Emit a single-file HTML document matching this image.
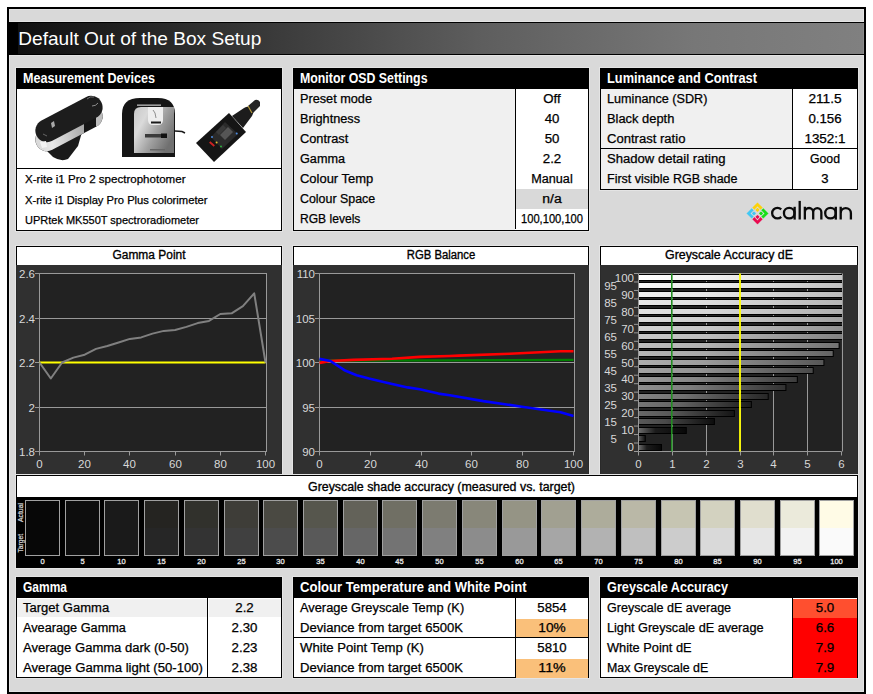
<!DOCTYPE html>
<html><head><meta charset="utf-8"><title>Default Out of the Box Setup</title>
<style>html,body{margin:0;padding:0;background:#fff;} svg{display:block;} text{font-family:"Liberation Sans",sans-serif;}</style>
</head><body>
<svg width="873" height="694" viewBox="0 0 873 694" shape-rendering="auto">
<rect x="0" y="0" width="873" height="694" fill="#fff" />
<rect x="7" y="7" width="859" height="687" fill="#000" />
<rect x="9" y="9" width="855" height="683" fill="#e4e4e4" />
<rect x="10" y="10" width="853" height="681" fill="#d9d9d9" />
<rect x="9" y="21" width="855" height="1" fill="#e4e4e4" />
<rect x="9" y="22" width="855" height="33" fill="#000" />
<defs><linearGradient id="tg" x1="0" x2="1" y1="0" y2="0"><stop offset="0" stop-color="#101010"/><stop offset="0.3" stop-color="#3a3a3a"/><stop offset="0.55" stop-color="#5e5e5e"/><stop offset="0.8" stop-color="#777"/><stop offset="1" stop-color="#808080"/></linearGradient></defs>
<rect x="18" y="23" width="845" height="31" fill="url(#tg)"/>
<rect x="863" y="23" width="1" height="31" fill="#8c8c8c" />
<rect x="9" y="55" width="855" height="1" fill="#e4e4e4" />
<text x="18.3" y="44.6" font-size="18.5" fill="#fff" text-anchor="start" textLength="243.0" lengthAdjust="spacingAndGlyphs" >Default Out of the Box Setup</text>
<rect x="15" y="67" width="268" height="165" fill="#e4e4e4" />
<rect x="16" y="68" width="266" height="163" fill="#000" />
<rect x="17" y="69" width="264" height="161" fill="#fff" />
<rect x="16" y="68" width="266" height="21" fill="#000" />
<text x="23" y="82.9" font-size="14" fill="#fff" text-anchor="start" font-weight="bold" textLength="132.0" lengthAdjust="spacingAndGlyphs" >Measurement Devices</text>
<rect x="16" y="168" width="266" height="1" fill="#000" />
<text x="25" y="183.0" font-size="11.3" fill="#000" text-anchor="start" textLength="160.5" lengthAdjust="spacingAndGlyphs" stroke="#000" stroke-width="0.25">X-rite i1 Pro 2 spectrophotomer</text>
<text x="25" y="203.5" font-size="11.3" fill="#000" text-anchor="start" textLength="182.5" lengthAdjust="spacingAndGlyphs" stroke="#000" stroke-width="0.25">X-rite i1 Display Pro Plus colorimeter</text>
<text x="25" y="224.0" font-size="11.3" fill="#000" text-anchor="start" textLength="174.0" lengthAdjust="spacingAndGlyphs" stroke="#000" stroke-width="0.25">UPRtek MK550T spectroradiometer</text>

<defs>
 <linearGradient id="silv1" gradientUnits="userSpaceOnUse" x1="36" y1="140" x2="84" y2="128"><stop offset="0" stop-color="#d8d8d8"/><stop offset="0.3" stop-color="#e8e8e8"/><stop offset="1" stop-color="#a8a8a8"/></linearGradient>
 <linearGradient id="silv2" x1="0" y1="0" x2="1" y2="0.6"><stop offset="0" stop-color="#c8c8c8"/><stop offset="0.3" stop-color="#dadada"/><stop offset="0.65" stop-color="#a0a0a0"/><stop offset="1" stop-color="#707070"/></linearGradient>
</defs>
<g>
 <clipPath id="cl1"><rect x="30" y="90" width="54" height="75"/></clipPath>
 <clipPath id="cl2"><rect x="96" y="90" width="10" height="40"/></clipPath>
 <path d="M46,150 L82,132 L78,146 L68,159 Q61,162 53,157 Z" fill="#1a1a1a"/>
 <line x1="46.9" y1="139.7" x2="91.1" y2="116.3" stroke="#161616" stroke-width="23" stroke-linecap="round"/>
 <line x1="46.9" y1="139.7" x2="91.1" y2="116.3" stroke="url(#silv1)" stroke-width="23" stroke-linecap="round" clip-path="url(#cl1)"/>
 <line x1="46.9" y1="139.7" x2="91.1" y2="116.3" stroke="#bdbdbd" stroke-width="23" stroke-linecap="round" clip-path="url(#cl2)"/>
 <line x1="46.9" y1="130.7" x2="91.1" y2="107.3" stroke="#1d1d1d" stroke-width="23" stroke-linecap="round"/>
 <path d="M40,142 L46,141 L47,147 L42,148 Z" fill="#f2f2f2"/>
 <path d="M51,123 L54,121 L55,126 L52,128 Z" fill="#aaa"/>
 <path d="M87,99 Q90,96 94,97" stroke="#888" stroke-width="0.8" fill="none"/>
 <path d="M92,106 Q96,106 98,103" stroke="#aaa" stroke-width="0.8" fill="none"/>
 <path d="M43,134 L47,136" stroke="#777" stroke-width="0.8"/>

 <path d="M122,157 L122,114 Q122,98 140,98 L158,98 Q175,98 175,114 L175,157 Z" fill="#151515"/>
 <path d="M134,153 L134,114 Q134,107 141,107 L174,107 L174,153 Z" fill="url(#silv2)"/>
 <rect x="137" y="104.5" width="24" height="1.3" fill="#bdbdbd"/>
 <path d="M148,107 L163,107 L163,120 Q163,125 158,125 L153,125 Q148,125 148,120 Z" fill="#eeeeee"/>
 <path d="M153,110 L155,113 L156,118" stroke="#666" stroke-width="0.7" fill="none"/>
 <rect x="151" y="121.5" width="10" height="2" fill="#1a1a1a"/>
 <rect x="145" y="134" width="16" height="3.5" fill="#3a3a3a"/>
 <rect x="161" y="133.5" width="6" height="4.5" fill="#111"/>
 <rect x="150" y="149" width="15" height="1.5" fill="#666"/>
 <path d="M175,131 L182,131.5 L185,133" stroke="#1a1a1a" stroke-width="1.6" fill="none"/>

 <path d="M196,143 L229,113 L246,132 L214,162 Z" fill="#151515"/>
 <path d="M232,116 L244,108 Q247,106 250,107 L253,110 Q254,113 252,116 L243,128 Z" fill="#1c1c1c"/>
 <path d="M248,106 L255,100 Q258,99 260,102 L260,106 L253,113 Z" fill="#252525"/>
 <path d="M248,106 L252,113" stroke="#b89c3a" stroke-width="1.2"/>
 <path d="M211,137 L225,122 L238,134 L222,149 Z" fill="#2a2a2a"/>
 <path d="M220,135 L228,127 L233,132 L225,140 Z" fill="#555"/>
 <path d="M216,132 L223,125 L226,128 L219,135 Z" fill="#3a3a3a"/>
 <rect x="209" y="143" width="6" height="2" fill="#c22" transform="rotate(40 212 144)"/>
 <circle cx="212" cy="137" r="1" fill="#4a8ae0"/>
 <circle cx="216.6" cy="142.4" r="1" fill="#e0c030"/>
 <circle cx="221" cy="146.5" r="1" fill="#30b040"/>
 <circle cx="236.7" cy="133.5" r="1" fill="#4a8ae0"/>
</g>
<rect x="292" y="67" width="298" height="165" fill="#e4e4e4" />
<rect x="293" y="68" width="296" height="163" fill="#000" />
<rect x="294" y="69" width="294" height="161" fill="#fff" />
<rect x="293" y="68" width="296" height="21" fill="#000" />
<text x="300" y="82.9" font-size="14" fill="#fff" text-anchor="start" font-weight="bold" textLength="127.5" lengthAdjust="spacingAndGlyphs" >Monitor OSD Settings</text>
<rect x="294" y="89" width="221" height="141" fill="#f0f0f0" />
<text x="300" y="102.5" font-size="12.3" fill="#000" text-anchor="start" textLength="72.0" lengthAdjust="spacingAndGlyphs" stroke="#000" stroke-width="0.25">Preset mode</text>
<text x="552.0" y="102.5" font-size="12" fill="#000" text-anchor="middle" textLength="17.4" lengthAdjust="spacingAndGlyphs" stroke="#000" stroke-width="0.25">Off</text>
<text x="300" y="122.5" font-size="12.3" fill="#000" text-anchor="start" textLength="60.1" lengthAdjust="spacingAndGlyphs" stroke="#000" stroke-width="0.25">Brightness</text>
<text x="552.0" y="122.5" font-size="12" fill="#000" text-anchor="middle" textLength="14.7" lengthAdjust="spacingAndGlyphs" stroke="#000" stroke-width="0.25">40</text>
<text x="300" y="142.5" font-size="12.3" fill="#000" text-anchor="start" textLength="48.3" lengthAdjust="spacingAndGlyphs" stroke="#000" stroke-width="0.25">Contrast</text>
<text x="552.0" y="142.5" font-size="12" fill="#000" text-anchor="middle" textLength="14.7" lengthAdjust="spacingAndGlyphs" stroke="#000" stroke-width="0.25">50</text>
<text x="300" y="162.5" font-size="12.3" fill="#000" text-anchor="start" textLength="45.0" lengthAdjust="spacingAndGlyphs" stroke="#000" stroke-width="0.25">Gamma</text>
<text x="552.0" y="162.5" font-size="12" fill="#000" text-anchor="middle" textLength="18.5" lengthAdjust="spacingAndGlyphs" stroke="#000" stroke-width="0.25">2.2</text>
<text x="300" y="182.5" font-size="12.3" fill="#000" text-anchor="start" textLength="73.2" lengthAdjust="spacingAndGlyphs" stroke="#000" stroke-width="0.25">Colour Temp</text>
<text x="552.0" y="182.5" font-size="12" fill="#000" text-anchor="middle" textLength="41.4" lengthAdjust="spacingAndGlyphs" stroke="#000" stroke-width="0.25">Manual</text>
<rect x="516" y="189" width="72" height="20" fill="#d9d9d9" />
<text x="300" y="202.5" font-size="12.3" fill="#000" text-anchor="start" textLength="75.2" lengthAdjust="spacingAndGlyphs" stroke="#000" stroke-width="0.25">Colour Space</text>
<text x="552.0" y="202.5" font-size="12" fill="#000" text-anchor="middle" textLength="19.4" lengthAdjust="spacingAndGlyphs" stroke="#000" stroke-width="0.25">n/a</text>
<text x="300" y="222.5" font-size="12.3" fill="#000" text-anchor="start" textLength="60.4" lengthAdjust="spacingAndGlyphs" stroke="#000" stroke-width="0.25">RGB levels</text>
<text x="552.0" y="222.5" font-size="12" fill="#000" text-anchor="middle" textLength="62.0" lengthAdjust="spacingAndGlyphs" stroke="#000" stroke-width="0.25">100,100,100</text>
<rect x="515" y="89" width="1" height="140" fill="#000" />
<rect x="599" y="67" width="260" height="124" fill="#e4e4e4" />
<rect x="600" y="68" width="258" height="122" fill="#000" />
<rect x="601" y="69" width="256" height="120" fill="#fff" />
<rect x="600" y="68" width="258" height="21" fill="#000" />
<text x="607" y="82.9" font-size="14" fill="#fff" text-anchor="start" font-weight="bold" textLength="150.0" lengthAdjust="spacingAndGlyphs" >Luminance and Contrast</text>
<rect x="601" y="89" width="191" height="100" fill="#f0f0f0" />
<text x="607" y="102.5" font-size="12.3" fill="#000" text-anchor="start" textLength="100.4" lengthAdjust="spacingAndGlyphs" stroke="#000" stroke-width="0.25">Luminance (SDR)</text>
<text x="825.0" y="102.5" font-size="12" fill="#000" text-anchor="middle" textLength="33.2" lengthAdjust="spacingAndGlyphs" stroke="#000" stroke-width="0.25">211.5</text>
<text x="607" y="122.5" font-size="12.3" fill="#000" text-anchor="start" textLength="67.3" lengthAdjust="spacingAndGlyphs" stroke="#000" stroke-width="0.25">Black depth</text>
<text x="825.0" y="122.5" font-size="12" fill="#000" text-anchor="middle" textLength="33.2" lengthAdjust="spacingAndGlyphs" stroke="#000" stroke-width="0.25">0.156</text>
<text x="607" y="142.5" font-size="12.3" fill="#000" text-anchor="start" textLength="78.4" lengthAdjust="spacingAndGlyphs" stroke="#000" stroke-width="0.25">Contrast ratio</text>
<text x="825.0" y="142.5" font-size="12" fill="#000" text-anchor="middle" textLength="41.2" lengthAdjust="spacingAndGlyphs" stroke="#000" stroke-width="0.25">1352:1</text>
<text x="607" y="162.5" font-size="12.3" fill="#000" text-anchor="start" textLength="118.5" lengthAdjust="spacingAndGlyphs" stroke="#000" stroke-width="0.25">Shadow detail rating</text>
<text x="825.0" y="162.5" font-size="12" fill="#000" text-anchor="middle" textLength="30.0" lengthAdjust="spacingAndGlyphs" stroke="#000" stroke-width="0.25">Good</text>
<text x="607" y="182.5" font-size="12.3" fill="#000" text-anchor="start" textLength="130.5" lengthAdjust="spacingAndGlyphs" stroke="#000" stroke-width="0.25">First visible RGB shade</text>
<text x="825.0" y="182.5" font-size="12" fill="#000" text-anchor="middle" textLength="7.3" lengthAdjust="spacingAndGlyphs" stroke="#000" stroke-width="0.25">3</text>
<rect x="792" y="89" width="1" height="100" fill="#000" />
<rect x="600" y="148" width="258" height="1" fill="#000" />
<g transform="translate(757.5,213.4) rotate(45)"><path d="M-7.60,-0.60 L-7.60,-7.60 L-0.60,-7.60 L-0.60,-5.00 L-5.00,-5.00 L-5.00,-0.60 Z" fill="#fcd20a" stroke="#fcd20a" stroke-width="0.3" stroke-linejoin="round"/><rect x="-4.0" y="-4.0" width="3.0" height="3.0" rx="0.5" fill="#fcd20a"/><path d="M7.60,-0.60 L7.60,-7.60 L0.60,-7.60 L0.60,-5.00 L5.00,-5.00 L5.00,-0.60 Z" fill="#16e016" stroke="#16e016" stroke-width="0.3" stroke-linejoin="round"/><rect x="1.0" y="-4.0" width="3.0" height="3.0" rx="0.5" fill="#16e016"/><path d="M7.60,0.60 L7.60,7.60 L0.60,7.60 L0.60,5.00 L5.00,5.00 L5.00,0.60 Z" fill="#ea0a50" stroke="#ea0a50" stroke-width="0.3" stroke-linejoin="round"/><rect x="1.0" y="1.0" width="3.0" height="3.0" rx="0.5" fill="#ea0a50"/><path d="M-7.60,0.60 L-7.60,7.60 L-0.60,7.60 L-0.60,5.00 L-5.00,5.00 L-5.00,0.60 Z" fill="#40c8f4" stroke="#40c8f4" stroke-width="0.3" stroke-linejoin="round"/><rect x="-4.0" y="1.0" width="3.0" height="3.0" rx="0.5" fill="#40c8f4"/></g>
<g fill="none" stroke="#0a0a0a" stroke-width="2.3">
 <path d="M781.2,209.4 A5.3,5.3 0 1 0 781.2,216.9"/>
 <circle cx="789.2" cy="213.15" r="5.25"/>
 <path d="M794.65,206.8 L794.65,219.6"/>
 <path d="M799.7,200.9 L799.7,219.5"/>
 <path d="M804.85,219.6 L804.85,206.8 M804.85,212.2 A4.17,4.17 0 0 1 813.2,212.2 L813.2,219.6 M813.2,212.2 A4.07,4.07 0 0 1 821.35,212.2 L821.35,219.6"/>
 <circle cx="830.45" cy="213.15" r="5.25"/>
 <path d="M835.8,206.8 L835.8,219.6"/>
 <path d="M840.7,219.6 L840.7,206.8 M840.7,213.15 A5.1,5.1 0 0 1 850.9,213.15 L850.9,219.6"/>
</g>
<rect x="15" y="245" width="268" height="232" fill="#e4e4e4" />
<rect x="16" y="246" width="266" height="230" fill="#000" />
<rect x="17" y="247" width="264" height="228" fill="#fff" />
<rect x="17" y="265" width="264" height="210" fill="#303030" />
<rect x="16" y="265" width="1" height="210" fill="#2a2a2a" />
<rect x="281" y="265" width="1" height="210" fill="#2a2a2a" />
<text x="149.0" y="259" font-size="12.5" fill="#000" text-anchor="middle" textLength="73.0" lengthAdjust="spacingAndGlyphs" stroke="#000" stroke-width="0.35">Gamma Point</text>
<rect x="292" y="245" width="298" height="232" fill="#e4e4e4" />
<rect x="293" y="246" width="296" height="230" fill="#000" />
<rect x="294" y="247" width="294" height="228" fill="#fff" />
<rect x="294" y="265" width="294" height="210" fill="#303030" />
<rect x="293" y="265" width="1" height="210" fill="#2a2a2a" />
<rect x="588" y="265" width="1" height="210" fill="#2a2a2a" />
<text x="441.0" y="259" font-size="12.5" fill="#000" text-anchor="middle" textLength="68.5" lengthAdjust="spacingAndGlyphs" stroke="#000" stroke-width="0.35">RGB Balance</text>
<rect x="599" y="245" width="260" height="232" fill="#e4e4e4" />
<rect x="600" y="246" width="258" height="230" fill="#000" />
<rect x="601" y="247" width="256" height="228" fill="#fff" />
<rect x="601" y="265" width="256" height="210" fill="#303030" />
<rect x="600" y="265" width="1" height="210" fill="#2a2a2a" />
<rect x="857" y="265" width="1" height="210" fill="#2a2a2a" />
<text x="729.0" y="259" font-size="12.5" fill="#000" text-anchor="middle" textLength="128.0" lengthAdjust="spacingAndGlyphs" stroke="#000" stroke-width="0.35">Greyscale Accuracy dE</text>
<defs><linearGradient id="b0" x1="0" x2="1"><stop offset="0" stop-color="rgb(255,255,255)"/><stop offset="0.35" stop-color="rgb(243,243,243)"/><stop offset="1" stop-color="rgb(198,198,198)"/></linearGradient><linearGradient id="b1" x1="0" x2="1"><stop offset="0" stop-color="rgb(247,247,247)"/><stop offset="0.35" stop-color="rgb(236,236,236)"/><stop offset="1" stop-color="rgb(193,193,193)"/></linearGradient><linearGradient id="b2" x1="0" x2="1"><stop offset="0" stop-color="rgb(240,240,240)"/><stop offset="0.35" stop-color="rgb(230,230,230)"/><stop offset="1" stop-color="rgb(187,187,187)"/></linearGradient><linearGradient id="b3" x1="0" x2="1"><stop offset="0" stop-color="rgb(233,233,233)"/><stop offset="0.35" stop-color="rgb(222,222,222)"/><stop offset="1" stop-color="rgb(181,181,181)"/></linearGradient><linearGradient id="b4" x1="0" x2="1"><stop offset="0" stop-color="rgb(225,225,225)"/><stop offset="0.35" stop-color="rgb(215,215,215)"/><stop offset="1" stop-color="rgb(175,175,175)"/></linearGradient><linearGradient id="b5" x1="0" x2="1"><stop offset="0" stop-color="rgb(217,217,217)"/><stop offset="0.35" stop-color="rgb(206,206,206)"/><stop offset="1" stop-color="rgb(163,163,163)"/></linearGradient><linearGradient id="b6" x1="0" x2="1"><stop offset="0" stop-color="rgb(209,209,209)"/><stop offset="0.35" stop-color="rgb(197,197,197)"/><stop offset="1" stop-color="rgb(146,146,146)"/></linearGradient><linearGradient id="b7" x1="0" x2="1"><stop offset="0" stop-color="rgb(201,201,201)"/><stop offset="0.35" stop-color="rgb(187,187,187)"/><stop offset="1" stop-color="rgb(130,130,130)"/></linearGradient><linearGradient id="b8" x1="0" x2="1"><stop offset="0" stop-color="rgb(192,192,192)"/><stop offset="0.35" stop-color="rgb(177,177,177)"/><stop offset="1" stop-color="rgb(115,115,115)"/></linearGradient><linearGradient id="b9" x1="0" x2="1"><stop offset="0" stop-color="rgb(183,183,183)"/><stop offset="0.35" stop-color="rgb(167,167,167)"/><stop offset="1" stop-color="rgb(100,100,100)"/></linearGradient><linearGradient id="b10" x1="0" x2="1"><stop offset="0" stop-color="rgb(174,174,174)"/><stop offset="0.35" stop-color="rgb(156,156,156)"/><stop offset="1" stop-color="rgb(87,87,87)"/></linearGradient><linearGradient id="b11" x1="0" x2="1"><stop offset="0" stop-color="rgb(164,164,164)"/><stop offset="0.35" stop-color="rgb(146,146,146)"/><stop offset="1" stop-color="rgb(73,73,73)"/></linearGradient><linearGradient id="b12" x1="0" x2="1"><stop offset="0" stop-color="rgb(154,154,154)"/><stop offset="0.35" stop-color="rgb(135,135,135)"/><stop offset="1" stop-color="rgb(61,61,61)"/></linearGradient><linearGradient id="b13" x1="0" x2="1"><stop offset="0" stop-color="rgb(143,143,143)"/><stop offset="0.35" stop-color="rgb(124,124,124)"/><stop offset="1" stop-color="rgb(50,50,50)"/></linearGradient><linearGradient id="b14" x1="0" x2="1"><stop offset="0" stop-color="rgb(131,131,131)"/><stop offset="0.35" stop-color="rgb(113,113,113)"/><stop offset="1" stop-color="rgb(39,39,39)"/></linearGradient><linearGradient id="b15" x1="0" x2="1"><stop offset="0" stop-color="rgb(118,118,118)"/><stop offset="0.35" stop-color="rgb(101,101,101)"/><stop offset="1" stop-color="rgb(29,29,29)"/></linearGradient><linearGradient id="b16" x1="0" x2="1"><stop offset="0" stop-color="rgb(105,105,105)"/><stop offset="0.35" stop-color="rgb(88,88,88)"/><stop offset="1" stop-color="rgb(21,21,21)"/></linearGradient><linearGradient id="b17" x1="0" x2="1"><stop offset="0" stop-color="rgb(89,89,89)"/><stop offset="0.35" stop-color="rgb(74,74,74)"/><stop offset="1" stop-color="rgb(13,13,13)"/></linearGradient><linearGradient id="b18" x1="0" x2="1"><stop offset="0" stop-color="#6a6a6a"/><stop offset="0.35" stop-color="#1c1c1c"/><stop offset="1" stop-color="#080808"/></linearGradient><linearGradient id="b19" x1="0" x2="1"><stop offset="0" stop-color="#555"/><stop offset="1" stop-color="#151515"/></linearGradient><linearGradient id="b20" x1="0" x2="1"><stop offset="0" stop-color="#6a6a6a"/><stop offset="0.35" stop-color="#1c1c1c"/><stop offset="1" stop-color="#080808"/></linearGradient></defs><rect x="39.5" y="273.5" width="227.0" height="178.0" fill="#222" stroke="#999" stroke-width="1"/>
<line x1="35" y1="273.5" x2="266.5" y2="273.5" stroke="#999" stroke-width="1" />
<text x="35" y="277.5" font-size="11.5" fill="#d8d8d8" text-anchor="end" >2.6</text>
<line x1="35" y1="318.5" x2="266.5" y2="318.5" stroke="#999" stroke-width="1" />
<text x="35" y="322.5" font-size="11.5" fill="#d8d8d8" text-anchor="end" >2.4</text>
<line x1="35" y1="362.5" x2="266.5" y2="362.5" stroke="#999" stroke-width="1" />
<text x="35" y="366.5" font-size="11.5" fill="#d8d8d8" text-anchor="end" >2.2</text>
<line x1="35" y1="407.5" x2="266.5" y2="407.5" stroke="#999" stroke-width="1" />
<text x="35" y="411.5" font-size="11.5" fill="#d8d8d8" text-anchor="end" >2</text>
<line x1="35" y1="451.5" x2="266.5" y2="451.5" stroke="#999" stroke-width="1" />
<text x="35" y="455.5" font-size="11.5" fill="#d8d8d8" text-anchor="end" >1.8</text>
<line x1="39.5" y1="451.5" x2="39.5" y2="455.5" stroke="#999" stroke-width="1" />
<text x="39.5" y="468" font-size="11.5" fill="#d8d8d8" text-anchor="middle" >0</text>
<line x1="84.5" y1="451.5" x2="84.5" y2="455.5" stroke="#999" stroke-width="1" />
<text x="84.5" y="468" font-size="11.5" fill="#d8d8d8" text-anchor="middle" >20</text>
<line x1="129.5" y1="451.5" x2="129.5" y2="455.5" stroke="#999" stroke-width="1" />
<text x="129.5" y="468" font-size="11.5" fill="#d8d8d8" text-anchor="middle" >40</text>
<line x1="175.5" y1="451.5" x2="175.5" y2="455.5" stroke="#999" stroke-width="1" />
<text x="175.5" y="468" font-size="11.5" fill="#d8d8d8" text-anchor="middle" >60</text>
<line x1="220.5" y1="451.5" x2="220.5" y2="455.5" stroke="#999" stroke-width="1" />
<text x="220.5" y="468" font-size="11.5" fill="#d8d8d8" text-anchor="middle" >80</text>
<line x1="265.5" y1="451.5" x2="265.5" y2="455.5" stroke="#999" stroke-width="1" />
<text x="265.5" y="468" font-size="11.5" fill="#d8d8d8" text-anchor="middle" >100</text>
<line x1="39.5" y1="362.5" x2="265.5" y2="362.5" stroke="#ffff00" stroke-width="2"/>
<polyline points="39.5,362.5 50.8,378.5 62.1,362.5 73.4,357.6 84.7,354.7 96.0,348.9 107.3,346.0 118.6,342.5 129.9,338.9 141.2,337.4 152.5,333.6 163.8,330.9 175.1,330.0 186.4,326.9 197.7,323.1 209.0,320.9 220.3,314.0 231.6,313.3 242.9,306.2 254.2,293.3 265.5,362.5" fill="none" stroke="#808080" stroke-width="2" stroke-linejoin="round"/>
<rect x="319.5" y="273.5" width="255.0" height="178.0" fill="#222" stroke="#999" stroke-width="1"/>
<line x1="315" y1="273.5" x2="574.5" y2="273.5" stroke="#999" stroke-width="1" />
<text x="315" y="277.5" font-size="11.5" fill="#d8d8d8" text-anchor="end" >110</text>
<line x1="315" y1="318.5" x2="574.5" y2="318.5" stroke="#999" stroke-width="1" />
<text x="315" y="322.5" font-size="11.5" fill="#d8d8d8" text-anchor="end" >105</text>
<line x1="315" y1="362.5" x2="574.5" y2="362.5" stroke="#999" stroke-width="1" />
<text x="315" y="366.5" font-size="11.5" fill="#d8d8d8" text-anchor="end" >100</text>
<line x1="315" y1="407.5" x2="574.5" y2="407.5" stroke="#999" stroke-width="1" />
<text x="315" y="411.5" font-size="11.5" fill="#d8d8d8" text-anchor="end" >95</text>
<line x1="315" y1="451.5" x2="574.5" y2="451.5" stroke="#999" stroke-width="1" />
<text x="315" y="455.5" font-size="11.5" fill="#d8d8d8" text-anchor="end" >90</text>
<line x1="319.5" y1="451.5" x2="319.5" y2="455.5" stroke="#999" stroke-width="1" />
<text x="319.5" y="468" font-size="11.5" fill="#d8d8d8" text-anchor="middle" >0</text>
<line x1="370.5" y1="451.5" x2="370.5" y2="455.5" stroke="#999" stroke-width="1" />
<text x="370.5" y="468" font-size="11.5" fill="#d8d8d8" text-anchor="middle" >20</text>
<line x1="421.5" y1="451.5" x2="421.5" y2="455.5" stroke="#999" stroke-width="1" />
<text x="421.5" y="468" font-size="11.5" fill="#d8d8d8" text-anchor="middle" >40</text>
<line x1="471.5" y1="451.5" x2="471.5" y2="455.5" stroke="#999" stroke-width="1" />
<text x="471.5" y="468" font-size="11.5" fill="#d8d8d8" text-anchor="middle" >60</text>
<line x1="522.5" y1="451.5" x2="522.5" y2="455.5" stroke="#999" stroke-width="1" />
<text x="522.5" y="468" font-size="11.5" fill="#d8d8d8" text-anchor="middle" >80</text>
<line x1="573.5" y1="451.5" x2="573.5" y2="455.5" stroke="#999" stroke-width="1" />
<text x="573.5" y="468" font-size="11.5" fill="#d8d8d8" text-anchor="middle" >100</text>
<polyline points="319.5,360.7 446.5,360.4 573.5,359.8" fill="none" stroke="#008000" stroke-width="2.2" stroke-linejoin="round"/>
<polyline points="319.5,362.9 330.4,361.0 353.5,359.9 392.1,358.8 419.8,356.9 449.8,356.0 458.7,355.6 509.7,353.8 560.5,351.3 573.5,351.3" fill="none" stroke="#ff0000" stroke-width="2.6" stroke-linejoin="round"/>
<polyline points="319.5,358.9 330.4,361.0 344.4,370.2 356.6,375.2 369.0,378.6 384.5,382.3 407.6,387.4 419.8,389.3 438.4,393.6 449.8,395.2 483.3,401.1 521.9,406.7 560.5,412.3 573.5,415.9" fill="none" stroke="#0000ff" stroke-width="2.6" stroke-linejoin="round"/>
<rect x="638.5" y="273.5" width="203.0" height="178.0" fill="#222"/>
<line x1="672.5" y1="273.5" x2="672.5" y2="451.5" stroke="#999" stroke-width="1" />
<line x1="706.5" y1="273.5" x2="706.5" y2="451.5" stroke="#999" stroke-width="1" />
<line x1="740.5" y1="273.5" x2="740.5" y2="451.5" stroke="#999" stroke-width="1" />
<line x1="773.5" y1="273.5" x2="773.5" y2="451.5" stroke="#999" stroke-width="1" />
<line x1="807.5" y1="273.5" x2="807.5" y2="451.5" stroke="#999" stroke-width="1" />
<line x1="638.5" y1="451.5" x2="638.5" y2="455.5" stroke="#999" stroke-width="1" />
<text x="638.5" y="468" font-size="11.5" fill="#d8d8d8" text-anchor="middle" >0</text>
<line x1="672.5" y1="451.5" x2="672.5" y2="455.5" stroke="#999" stroke-width="1" />
<text x="672.5" y="468" font-size="11.5" fill="#d8d8d8" text-anchor="middle" >1</text>
<line x1="706.5" y1="451.5" x2="706.5" y2="455.5" stroke="#999" stroke-width="1" />
<text x="706.5" y="468" font-size="11.5" fill="#d8d8d8" text-anchor="middle" >2</text>
<line x1="740.5" y1="451.5" x2="740.5" y2="455.5" stroke="#999" stroke-width="1" />
<text x="740.5" y="468" font-size="11.5" fill="#d8d8d8" text-anchor="middle" >3</text>
<line x1="773.5" y1="451.5" x2="773.5" y2="455.5" stroke="#999" stroke-width="1" />
<text x="773.5" y="468" font-size="11.5" fill="#d8d8d8" text-anchor="middle" >4</text>
<line x1="807.5" y1="451.5" x2="807.5" y2="455.5" stroke="#999" stroke-width="1" />
<text x="807.5" y="468" font-size="11.5" fill="#d8d8d8" text-anchor="middle" >5</text>
<line x1="841.5" y1="451.5" x2="841.5" y2="455.5" stroke="#999" stroke-width="1" />
<text x="841.5" y="468" font-size="11.5" fill="#d8d8d8" text-anchor="middle" >6</text>
<line x1="634" y1="273.5" x2="638.5" y2="273.5" stroke="#999" stroke-width="1" />
<rect x="639" y="274" width="204.0" height="7" fill="#000"/>
<rect x="639" y="275" width="203.0" height="5" fill="url(#b0)"/>
<text x="634" y="281.73809523809524" font-size="11.5" fill="#d8d8d8" text-anchor="end" >100</text>
<line x1="634" y1="281.9761904761905" x2="638.5" y2="281.9761904761905" stroke="#999" stroke-width="1" />
<rect x="639" y="282" width="204.0" height="7" fill="#000"/>
<rect x="639" y="283" width="203.0" height="5" fill="url(#b1)"/>
<text x="617" y="290.2142857142857" font-size="11.5" fill="#d8d8d8" text-anchor="end" >95</text>
<line x1="634" y1="290.45238095238096" x2="638.5" y2="290.45238095238096" stroke="#999" stroke-width="1" />
<rect x="639" y="291" width="204.0" height="7" fill="#000"/>
<rect x="639" y="292" width="203.0" height="5" fill="url(#b2)"/>
<text x="634" y="298.6904761904762" font-size="11.5" fill="#d8d8d8" text-anchor="end" >90</text>
<line x1="634" y1="298.92857142857144" x2="638.5" y2="298.92857142857144" stroke="#999" stroke-width="1" />
<rect x="639" y="299" width="204.0" height="7" fill="#000"/>
<rect x="639" y="300" width="203.0" height="5" fill="url(#b3)"/>
<text x="617" y="307.1666666666667" font-size="11.5" fill="#d8d8d8" text-anchor="end" >85</text>
<line x1="634" y1="307.4047619047619" x2="638.5" y2="307.4047619047619" stroke="#999" stroke-width="1" />
<rect x="639" y="308" width="204.0" height="7" fill="#000"/>
<rect x="639" y="309" width="203.0" height="5" fill="url(#b4)"/>
<text x="634" y="315.64285714285717" font-size="11.5" fill="#d8d8d8" text-anchor="end" >80</text>
<line x1="634" y1="315.8809523809524" x2="638.5" y2="315.8809523809524" stroke="#999" stroke-width="1" />
<rect x="639" y="316" width="204.0" height="7" fill="#000"/>
<rect x="639" y="317" width="203.0" height="5" fill="url(#b5)"/>
<text x="617" y="324.11904761904765" font-size="11.5" fill="#d8d8d8" text-anchor="end" >75</text>
<line x1="634" y1="324.3571428571429" x2="638.5" y2="324.3571428571429" stroke="#999" stroke-width="1" />
<rect x="639" y="325" width="204.0" height="7" fill="#000"/>
<rect x="639" y="326" width="203.0" height="5" fill="url(#b6)"/>
<text x="634" y="332.59523809523813" font-size="11.5" fill="#d8d8d8" text-anchor="end" >70</text>
<line x1="634" y1="332.8333333333333" x2="638.5" y2="332.8333333333333" stroke="#999" stroke-width="1" />
<rect x="639" y="333" width="204.0" height="7" fill="#000"/>
<rect x="639" y="334" width="203.0" height="5" fill="url(#b7)"/>
<text x="617" y="341.07142857142856" font-size="11.5" fill="#d8d8d8" text-anchor="end" >65</text>
<line x1="634" y1="341.3095238095238" x2="638.5" y2="341.3095238095238" stroke="#999" stroke-width="1" />
<rect x="639" y="342" width="200.6" height="7" fill="#000"/>
<rect x="639" y="343" width="199.6" height="5" fill="url(#b8)"/>
<text x="634" y="349.54761904761904" font-size="11.5" fill="#d8d8d8" text-anchor="end" >60</text>
<line x1="634" y1="349.7857142857143" x2="638.5" y2="349.7857142857143" stroke="#999" stroke-width="1" />
<rect x="639" y="350" width="194.7" height="7" fill="#000"/>
<rect x="639" y="351" width="193.7" height="5" fill="url(#b9)"/>
<text x="617" y="358.0238095238095" font-size="11.5" fill="#d8d8d8" text-anchor="end" >55</text>
<line x1="634" y1="358.26190476190476" x2="638.5" y2="358.26190476190476" stroke="#999" stroke-width="1" />
<rect x="639" y="359" width="185.4" height="7" fill="#000"/>
<rect x="639" y="360" width="184.4" height="5" fill="url(#b10)"/>
<text x="634" y="366.5" font-size="11.5" fill="#d8d8d8" text-anchor="end" >50</text>
<line x1="634" y1="366.73809523809524" x2="638.5" y2="366.73809523809524" stroke="#999" stroke-width="1" />
<rect x="639" y="367" width="174.7" height="7" fill="#000"/>
<rect x="639" y="368" width="173.7" height="5" fill="url(#b11)"/>
<text x="617" y="374.9761904761905" font-size="11.5" fill="#d8d8d8" text-anchor="end" >45</text>
<line x1="634" y1="375.2142857142857" x2="638.5" y2="375.2142857142857" stroke="#999" stroke-width="1" />
<rect x="639" y="376" width="158.8" height="7" fill="#000"/>
<rect x="639" y="377" width="157.8" height="5" fill="url(#b12)"/>
<text x="634" y="383.45238095238096" font-size="11.5" fill="#d8d8d8" text-anchor="end" >40</text>
<line x1="634" y1="383.6904761904762" x2="638.5" y2="383.6904761904762" stroke="#999" stroke-width="1" />
<rect x="639" y="384" width="147.4" height="7" fill="#000"/>
<rect x="639" y="385" width="146.4" height="5" fill="url(#b13)"/>
<text x="617" y="391.92857142857144" font-size="11.5" fill="#d8d8d8" text-anchor="end" >35</text>
<line x1="634" y1="392.1666666666667" x2="638.5" y2="392.1666666666667" stroke="#999" stroke-width="1" />
<rect x="639" y="393" width="129.7" height="7" fill="#000"/>
<rect x="639" y="394" width="128.7" height="5" fill="url(#b14)"/>
<text x="634" y="400.4047619047619" font-size="11.5" fill="#d8d8d8" text-anchor="end" >30</text>
<line x1="634" y1="400.6428571428571" x2="638.5" y2="400.6428571428571" stroke="#999" stroke-width="1" />
<rect x="639" y="401" width="112.9" height="7" fill="#000"/>
<rect x="639" y="402" width="111.9" height="5" fill="url(#b15)"/>
<text x="617" y="408.88095238095235" font-size="11.5" fill="#d8d8d8" text-anchor="end" >25</text>
<line x1="634" y1="409.1190476190476" x2="638.5" y2="409.1190476190476" stroke="#999" stroke-width="1" />
<rect x="639" y="410" width="95.9" height="7" fill="#000"/>
<rect x="639" y="411" width="94.9" height="5" fill="url(#b16)"/>
<text x="634" y="417.35714285714283" font-size="11.5" fill="#d8d8d8" text-anchor="end" >20</text>
<line x1="634" y1="417.5952380952381" x2="638.5" y2="417.5952380952381" stroke="#999" stroke-width="1" />
<rect x="639" y="418" width="75.9" height="7" fill="#000"/>
<rect x="639" y="419" width="74.9" height="5" fill="url(#b17)"/>
<text x="617" y="425.8333333333333" font-size="11.5" fill="#d8d8d8" text-anchor="end" >15</text>
<line x1="634" y1="426.07142857142856" x2="638.5" y2="426.07142857142856" stroke="#999" stroke-width="1" />
<rect x="639" y="427" width="47.8" height="7" fill="#000"/>
<rect x="639" y="428" width="46.8" height="5" fill="url(#b18)"/>
<text x="634" y="434.3095238095238" font-size="11.5" fill="#d8d8d8" text-anchor="end" >10</text>
<line x1="634" y1="434.54761904761904" x2="638.5" y2="434.54761904761904" stroke="#999" stroke-width="1" />
<rect x="639" y="435" width="6.8" height="7" fill="#000"/>
<rect x="639" y="436" width="5.8" height="5" fill="url(#b19)"/>
<text x="617" y="442.7857142857143" font-size="11.5" fill="#d8d8d8" text-anchor="end" >5</text>
<line x1="634" y1="443.0238095238095" x2="638.5" y2="443.0238095238095" stroke="#999" stroke-width="1" />
<rect x="639" y="444" width="23.0" height="7" fill="#000"/>
<rect x="639" y="445" width="22.0" height="5" fill="url(#b20)"/>
<text x="634" y="451.26190476190476" font-size="11.5" fill="#d8d8d8" text-anchor="end" >0</text>
<line x1="634" y1="451.5" x2="638.5" y2="451.5" stroke="#999" stroke-width="1" />
<line x1="638.5" y1="273.5" x2="638.5" y2="451.5" stroke="#999"/>
<line x1="638.5" y1="451.5" x2="841.5" y2="451.5" stroke="#999"/>
<line x1="638.5" y1="273.5" x2="841.5" y2="273.5" stroke="#999"/>
<line x1="842.5" y1="273.5" x2="842.5" y2="451.5" stroke="#999" stroke-width="1"/>
<line x1="671.8" y1="273.5" x2="671.8" y2="451.5" stroke="#228b22" stroke-width="1.6"/>
<line x1="740" y1="273.5" x2="740" y2="451.5" stroke="#ffff00" stroke-width="1.8"/>
<rect x="15" y="474" width="844" height="95" fill="#e4e4e4" />
<rect x="16" y="475" width="842" height="93" fill="#000" />
<rect x="17" y="476" width="840" height="91" fill="#fff" />
<rect x="17" y="497" width="840" height="70" fill="#000" />
<text x="441.5" y="490.6" font-size="12.5" fill="#000" text-anchor="middle" textLength="267.0" lengthAdjust="spacingAndGlyphs" stroke="#000" stroke-width="0.35">Greyscale shade accuracy (measured vs. target)</text>
<rect x="25" y="500" width="35" height="56" fill="#a0a0a0"/>
<rect x="26" y="501" width="33" height="27" fill="rgb(7, 7, 7)"/>
<rect x="26" y="528" width="33" height="27" fill="rgb(7, 7, 7)"/>
<text x="42.5" y="564" font-size="7.5" fill="#e8e8e8" stroke="#e8e8e8" stroke-width="0.3" text-anchor="middle">0</text>
<rect x="65" y="500" width="35" height="56" fill="#a0a0a0"/>
<rect x="66" y="501" width="33" height="27" fill="rgb(13, 13, 13)"/>
<rect x="66" y="528" width="33" height="27" fill="rgb(13, 13, 13)"/>
<text x="82.5" y="564" font-size="7.5" fill="#e8e8e8" stroke="#e8e8e8" stroke-width="0.3" text-anchor="middle">5</text>
<rect x="104" y="500" width="35" height="56" fill="#a0a0a0"/>
<rect x="105" y="501" width="33" height="27" fill="rgb(26, 26, 26)"/>
<rect x="105" y="528" width="33" height="27" fill="rgb(26, 26, 26)"/>
<text x="121.5" y="564" font-size="7.5" fill="#e8e8e8" stroke="#e8e8e8" stroke-width="0.3" text-anchor="middle">10</text>
<rect x="144" y="500" width="35" height="56" fill="#a0a0a0"/>
<rect x="145" y="501" width="33" height="27" fill="rgb(37, 36, 33)"/>
<rect x="145" y="528" width="33" height="27" fill="rgb(38, 38, 38)"/>
<text x="161.5" y="564" font-size="7.5" fill="#e8e8e8" stroke="#e8e8e8" stroke-width="0.3" text-anchor="middle">15</text>
<rect x="184" y="500" width="35" height="56" fill="#a0a0a0"/>
<rect x="185" y="501" width="33" height="27" fill="rgb(49, 49, 44)"/>
<rect x="185" y="528" width="33" height="27" fill="rgb(51, 51, 51)"/>
<text x="201.5" y="564" font-size="7.5" fill="#e8e8e8" stroke="#e8e8e8" stroke-width="0.3" text-anchor="middle">20</text>
<rect x="224" y="500" width="35" height="56" fill="#a0a0a0"/>
<rect x="225" y="501" width="33" height="27" fill="rgb(62, 61, 56)"/>
<rect x="225" y="528" width="33" height="27" fill="rgb(64, 64, 64)"/>
<text x="241.5" y="564" font-size="7.5" fill="#e8e8e8" stroke="#e8e8e8" stroke-width="0.3" text-anchor="middle">25</text>
<rect x="263" y="500" width="35" height="56" fill="#a0a0a0"/>
<rect x="264" y="501" width="33" height="27" fill="rgb(74, 73, 66)"/>
<rect x="264" y="528" width="33" height="27" fill="rgb(76, 76, 76)"/>
<text x="280.5" y="564" font-size="7.5" fill="#e8e8e8" stroke="#e8e8e8" stroke-width="0.3" text-anchor="middle">30</text>
<rect x="303" y="500" width="35" height="56" fill="#a0a0a0"/>
<rect x="304" y="501" width="33" height="27" fill="rgb(86, 86, 77)"/>
<rect x="304" y="528" width="33" height="27" fill="rgb(89, 89, 89)"/>
<text x="320.5" y="564" font-size="7.5" fill="#e8e8e8" stroke="#e8e8e8" stroke-width="0.3" text-anchor="middle">35</text>
<rect x="343" y="500" width="35" height="56" fill="#a0a0a0"/>
<rect x="344" y="501" width="33" height="27" fill="rgb(99, 98, 89)"/>
<rect x="344" y="528" width="33" height="27" fill="rgb(102, 102, 102)"/>
<text x="360.5" y="564" font-size="7.5" fill="#e8e8e8" stroke="#e8e8e8" stroke-width="0.3" text-anchor="middle">40</text>
<rect x="382" y="500" width="35" height="56" fill="#a0a0a0"/>
<rect x="383" y="501" width="33" height="27" fill="rgb(112, 111, 100)"/>
<rect x="383" y="528" width="33" height="27" fill="rgb(115, 115, 115)"/>
<text x="399.5" y="564" font-size="7.5" fill="#e8e8e8" stroke="#e8e8e8" stroke-width="0.3" text-anchor="middle">45</text>
<rect x="422" y="500" width="35" height="56" fill="#a0a0a0"/>
<rect x="423" y="501" width="33" height="27" fill="rgb(124, 123, 112)"/>
<rect x="423" y="528" width="33" height="27" fill="rgb(128, 128, 128)"/>
<text x="439.5" y="564" font-size="7.5" fill="#e8e8e8" stroke="#e8e8e8" stroke-width="0.3" text-anchor="middle">50</text>
<rect x="462" y="500" width="35" height="56" fill="#a0a0a0"/>
<rect x="463" y="501" width="33" height="27" fill="rgb(136, 135, 122)"/>
<rect x="463" y="528" width="33" height="27" fill="rgb(140, 140, 140)"/>
<text x="479.5" y="564" font-size="7.5" fill="#e8e8e8" stroke="#e8e8e8" stroke-width="0.3" text-anchor="middle">55</text>
<rect x="502" y="500" width="35" height="56" fill="#a0a0a0"/>
<rect x="503" y="501" width="33" height="27" fill="rgb(149, 148, 133)"/>
<rect x="503" y="528" width="33" height="27" fill="rgb(153, 153, 153)"/>
<text x="519.5" y="564" font-size="7.5" fill="#e8e8e8" stroke="#e8e8e8" stroke-width="0.3" text-anchor="middle">60</text>
<rect x="541" y="500" width="35" height="56" fill="#a0a0a0"/>
<rect x="542" y="501" width="33" height="27" fill="rgb(161, 160, 145)"/>
<rect x="542" y="528" width="33" height="27" fill="rgb(166, 166, 166)"/>
<text x="558.5" y="564" font-size="7.5" fill="#e8e8e8" stroke="#e8e8e8" stroke-width="0.3" text-anchor="middle">65</text>
<rect x="581" y="500" width="35" height="56" fill="#a0a0a0"/>
<rect x="582" y="501" width="33" height="27" fill="rgb(173, 172, 155)"/>
<rect x="582" y="528" width="33" height="27" fill="rgb(178, 178, 178)"/>
<text x="598.5" y="564" font-size="7.5" fill="#e8e8e8" stroke="#e8e8e8" stroke-width="0.3" text-anchor="middle">70</text>
<rect x="621" y="500" width="35" height="56" fill="#a0a0a0"/>
<rect x="622" y="501" width="33" height="27" fill="rgb(186, 184, 167)"/>
<rect x="622" y="528" width="33" height="27" fill="rgb(191, 191, 191)"/>
<text x="638.5" y="564" font-size="7.5" fill="#e8e8e8" stroke="#e8e8e8" stroke-width="0.3" text-anchor="middle">75</text>
<rect x="661" y="500" width="35" height="56" fill="#a0a0a0"/>
<rect x="662" y="501" width="33" height="27" fill="rgb(198, 197, 178)"/>
<rect x="662" y="528" width="33" height="27" fill="rgb(204, 204, 204)"/>
<text x="678.5" y="564" font-size="7.5" fill="#e8e8e8" stroke="#e8e8e8" stroke-width="0.3" text-anchor="middle">80</text>
<rect x="700" y="500" width="35" height="56" fill="#a0a0a0"/>
<rect x="701" y="501" width="33" height="27" fill="rgb(211, 210, 192)"/>
<rect x="701" y="528" width="33" height="27" fill="rgb(217, 217, 217)"/>
<text x="717.5" y="564" font-size="7.5" fill="#e8e8e8" stroke="#e8e8e8" stroke-width="0.3" text-anchor="middle">85</text>
<rect x="740" y="500" width="35" height="56" fill="#a0a0a0"/>
<rect x="741" y="501" width="33" height="27" fill="rgb(224, 222, 206)"/>
<rect x="741" y="528" width="33" height="27" fill="rgb(230, 230, 230)"/>
<text x="757.5" y="564" font-size="7.5" fill="#e8e8e8" stroke="#e8e8e8" stroke-width="0.3" text-anchor="middle">90</text>
<rect x="780" y="500" width="35" height="56" fill="#a0a0a0"/>
<rect x="781" y="501" width="33" height="27" fill="rgb(235, 234, 219)"/>
<rect x="781" y="528" width="33" height="27" fill="rgb(242, 242, 242)"/>
<text x="797.5" y="564" font-size="7.5" fill="#e8e8e8" stroke="#e8e8e8" stroke-width="0.3" text-anchor="middle">95</text>
<rect x="819" y="500" width="35" height="56" fill="#a0a0a0"/>
<rect x="820" y="501" width="33" height="27" fill="rgb(255, 251, 230)"/>
<rect x="820" y="528" width="33" height="27" fill="rgb(250, 250, 250)"/>
<text x="836.5" y="564" font-size="7.5" fill="#e8e8e8" stroke="#e8e8e8" stroke-width="0.3" text-anchor="middle">100</text>
<text transform="translate(22.7,522) rotate(-90)" font-size="7" fill="#d0d0d0" stroke="#d0d0d0" stroke-width="0.25" textLength="19" lengthAdjust="spacingAndGlyphs">Actual</text>
<text transform="translate(22.7,552.5) rotate(-90)" font-size="7" fill="#d0d0d0" stroke="#d0d0d0" stroke-width="0.25" textLength="18.5" lengthAdjust="spacingAndGlyphs">Target</text>
<rect x="15" y="576" width="268" height="103" fill="#e4e4e4" />
<rect x="16" y="577" width="266" height="101" fill="#000" />
<rect x="17" y="578" width="264" height="99" fill="#fff" />
<rect x="16" y="577" width="266" height="21" fill="#000" />
<text x="23" y="591.9" font-size="14" fill="#fff" text-anchor="start" font-weight="bold" textLength="44.0" lengthAdjust="spacingAndGlyphs" >Gamma</text>
<rect x="17" y="599" width="190" height="18" fill="#f0f0f0" />
<rect x="209" y="599" width="72" height="18" fill="#f0f0f0" />
<text x="23" y="612" font-size="12.3" fill="#000" text-anchor="start" textLength="86.2" lengthAdjust="spacingAndGlyphs" stroke="#000" stroke-width="0.25">Target Gamma</text>
<text x="244.5" y="612" font-size="12" fill="#000" text-anchor="middle" textLength="18.5" lengthAdjust="spacingAndGlyphs" stroke="#000" stroke-width="0.25">2.2</text>
<text x="23" y="632" font-size="12.3" fill="#000" text-anchor="start" textLength="102.9" lengthAdjust="spacingAndGlyphs" stroke="#000" stroke-width="0.25">Avearage Gamma</text>
<text x="244.5" y="632" font-size="12" fill="#000" text-anchor="middle" textLength="25.8" lengthAdjust="spacingAndGlyphs" stroke="#000" stroke-width="0.25">2.30</text>
<text x="23" y="652" font-size="12.3" fill="#000" text-anchor="start" textLength="165.8" lengthAdjust="spacingAndGlyphs" stroke="#000" stroke-width="0.25">Average Gamma dark (0-50)</text>
<text x="244.5" y="652" font-size="12" fill="#000" text-anchor="middle" textLength="25.8" lengthAdjust="spacingAndGlyphs" stroke="#000" stroke-width="0.25">2.23</text>
<text x="23" y="672" font-size="12.3" fill="#000" text-anchor="start" textLength="180.0" lengthAdjust="spacingAndGlyphs" stroke="#000" stroke-width="0.25">Average Gamma light (50-100)</text>
<text x="244.5" y="672" font-size="12" fill="#000" text-anchor="middle" textLength="25.8" lengthAdjust="spacingAndGlyphs" stroke="#000" stroke-width="0.25">2.38</text>
<rect x="207" y="598" width="1" height="80" fill="#000" />
<rect x="292" y="576" width="298" height="103" fill="#e4e4e4" />
<rect x="293" y="577" width="296" height="101" fill="#000" />
<rect x="294" y="578" width="294" height="99" fill="#fff" />
<rect x="293" y="577" width="296" height="21" fill="#000" />
<text x="300" y="591.9" font-size="14" fill="#fff" text-anchor="start" font-weight="bold" textLength="226.6" lengthAdjust="spacingAndGlyphs" >Colour Temperature and White Point</text>
<text x="300" y="612" font-size="12.3" fill="#000" text-anchor="start" textLength="164.2" lengthAdjust="spacingAndGlyphs" stroke="#000" stroke-width="0.25">Average Greyscale Temp (K)</text>
<text x="552.0" y="612" font-size="12" fill="#000" text-anchor="middle" textLength="29.3" lengthAdjust="spacingAndGlyphs" stroke="#000" stroke-width="0.25">5854</text>
<rect x="516" y="619" width="72" height="19" fill="#fac07a" />
<text x="300" y="632" font-size="12.3" fill="#000" text-anchor="start" textLength="163.0" lengthAdjust="spacingAndGlyphs" stroke="#000" stroke-width="0.25">Deviance from target 6500K</text>
<text x="552.0" y="632" font-size="12" fill="#000" text-anchor="middle" textLength="27.4" lengthAdjust="spacingAndGlyphs" stroke="#000" stroke-width="0.25">10%</text>
<text x="300" y="652" font-size="12.3" fill="#000" text-anchor="start" textLength="123.9" lengthAdjust="spacingAndGlyphs" stroke="#000" stroke-width="0.25">White Point Temp (K)</text>
<text x="552.0" y="652" font-size="12" fill="#000" text-anchor="middle" textLength="29.3" lengthAdjust="spacingAndGlyphs" stroke="#000" stroke-width="0.25">5810</text>
<rect x="516" y="659" width="72" height="19" fill="#fac07a" />
<text x="300" y="672" font-size="12.3" fill="#000" text-anchor="start" textLength="163.0" lengthAdjust="spacingAndGlyphs" stroke="#000" stroke-width="0.25">Deviance from target 6500K</text>
<text x="552.0" y="672" font-size="12" fill="#000" text-anchor="middle" textLength="27.4" lengthAdjust="spacingAndGlyphs" stroke="#000" stroke-width="0.25">11%</text>
<rect x="515" y="598" width="1" height="80" fill="#000" />
<rect x="293" y="637" width="296" height="1" fill="#000" />
<rect x="599" y="576" width="260" height="103" fill="#e4e4e4" />
<rect x="600" y="577" width="258" height="101" fill="#000" />
<rect x="601" y="578" width="256" height="99" fill="#fff" />
<rect x="600" y="577" width="258" height="21" fill="#000" />
<text x="607" y="591.9" font-size="14" fill="#fff" text-anchor="start" font-weight="bold" textLength="121.0" lengthAdjust="spacingAndGlyphs" >Greyscale Accuracy</text>
<rect x="793" y="599" width="64" height="19" fill="#ff4f2f" />
<text x="607" y="612" font-size="12.3" fill="#000" text-anchor="start" textLength="124.1" lengthAdjust="spacingAndGlyphs" stroke="#000" stroke-width="0.25">Greyscale dE average</text>
<text x="825.0" y="612" font-size="12" fill="#000" text-anchor="middle" textLength="18.5" lengthAdjust="spacingAndGlyphs" stroke="#000" stroke-width="0.25">5.0</text>
<rect x="793" y="618" width="64" height="20" fill="#ff0000" />
<text x="607" y="632" font-size="12.3" fill="#000" text-anchor="start" textLength="156.5" lengthAdjust="spacingAndGlyphs" stroke="#000" stroke-width="0.25">Light Greyscale dE average</text>
<text x="825.0" y="632" font-size="12" fill="#000" text-anchor="middle" textLength="18.5" lengthAdjust="spacingAndGlyphs" stroke="#000" stroke-width="0.25">6.6</text>
<rect x="793" y="638" width="64" height="20" fill="#ff0000" />
<text x="607" y="652" font-size="12.3" fill="#000" text-anchor="start" textLength="84.6" lengthAdjust="spacingAndGlyphs" stroke="#000" stroke-width="0.25">White Point dE</text>
<text x="825.0" y="652" font-size="12" fill="#000" text-anchor="middle" textLength="18.5" lengthAdjust="spacingAndGlyphs" stroke="#000" stroke-width="0.25">7.9</text>
<rect x="793" y="658" width="64" height="20" fill="#ff0000" />
<text x="607" y="672" font-size="12.3" fill="#000" text-anchor="start" textLength="101.2" lengthAdjust="spacingAndGlyphs" stroke="#000" stroke-width="0.25">Max Greyscale dE</text>
<text x="825.0" y="672" font-size="12" fill="#000" text-anchor="middle" textLength="18.5" lengthAdjust="spacingAndGlyphs" stroke="#000" stroke-width="0.25">7.9</text>
<rect x="792" y="598" width="1" height="80" fill="#000" />
</svg>
</body></html>
